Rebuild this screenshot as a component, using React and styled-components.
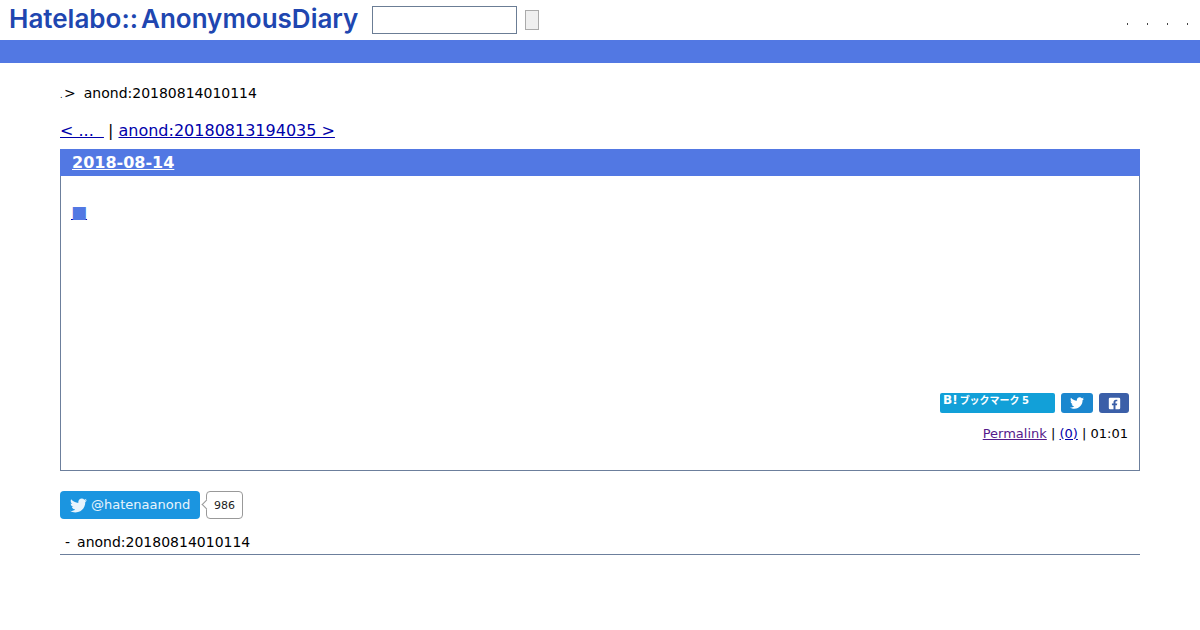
import React from "react";
import styled, { createGlobalStyle } from "styled-components";
import { FaTwitter, FaFacebookSquare } from "react-icons/fa";

const GlobalStyle = createGlobalStyle`
  body {
    margin: 0;
    background: #fff;
    color: #000;
    font-family: "DejaVu Sans", "Noto Sans CJK JP", sans-serif;
    font-size: 14px;
  }
  a { color: #0000aa; }
`;

export default function App() {
  return (
    <>
      <GlobalStyle />
      <Header>
        <Logo>Hatelabo::<LogoRest>AnonymousDiary</LogoRest></Logo>
        <SearchInput />
        <SearchButton />
        <HeaderLinks>
          <Dot />
          <Dot />
          <Dot />
          <Dot />
        </HeaderLinks>
      </Header>
      <Band />
      <Page>
        <Crumb>
          <TinyDot>.</TinyDot>
          <span>&gt;</span>
          <CrumbTitle>anond:20180814010114</CrumbTitle>
        </Crumb>
        <PrevNext>
          <PrevLink href="#prev">&lt; ... &nbsp;</PrevLink> | <a href="#next">anond:20180813194035 &gt;</a>
        </PrevNext>
        <Day>
          <DayHeader>
            <a href="#day">2018-08-14</a>
          </DayHeader>
          <DayBody>
            <Section>
              <a href="#entry">■</a>
            </Section>
            <ShareRow>
              <HatenaButton>
                <HatenaMark>B!</HatenaMark>ブックマーク 5
              </HatenaButton>
              <ShareButton color="#1b87cf" $width={32}><FaTwitter size={14} /></ShareButton>
              <ShareButton color="#3b5fa8" $width={30}><FaFacebookSquare size={13} /></ShareButton>
            </ShareRow>
            <Footer>
              <PermaLink href="#perma">Permalink</PermaLink> | <a href="#comments">(0)</a> | 01:01
            </Footer>
          </DayBody>
        </Day>
        <FollowRow>
          <FollowButton>
            <FaTwitter size={17} />
            <FollowName>@hatenaanond</FollowName>
          </FollowButton>
          <FollowCount>986</FollowCount>
        </FollowRow>
        <RefTitle>
          <span>-</span>
          <span>anond:20180814010114</span>
        </RefTitle>
      </Page>
    </>
  );
}

/* ================= HEADER ================= */
const Header = styled.div`
  display: flex;
  align-items: center;
  height: 40px;
  padding-left: 8px;
`;

const Logo = styled.div`
  width: 363px;
  margin-bottom: 4px;
  padding-left: 1px;
  color: #2046b0;
  font-family: "Inter", sans-serif;
  font-weight: 600;
  font-size: 26px;
  white-space: nowrap;
`;

const LogoRest = styled.span`
  margin-left: 3px;
`;

const SearchInput = styled.div`
  box-sizing: border-box;
  width: 145px;
  height: 28px;
  border: 1px solid #6b7d95;
  background: #fff;
`;

const SearchButton = styled.div`
  box-sizing: border-box;
  width: 14px;
  height: 20px;
  margin-left: 8px;
  border: 1px solid #aaa;
  background: #efefef;
`;

const HeaderLinks = styled.div`
  display: flex;
  gap: 19px;
  margin-left: auto;
  margin-right: 12px;
  padding-top: 8px;
`;

const Dot = styled.i`
  display: block;
  width: 1px;
  height: 2px;
  background: #444;
`;

const Band = styled.div`
  height: 23px;
  background: #5278e3;
`;

/* ================= PAGE ================= */
const Page = styled.div`
  margin: 0 60px;
`;

const Crumb = styled.div`
  display: flex;
  align-items: baseline;
  padding-top: 21px;
  height: 18px;
  line-height: 18px;
  font-size: 14px;
`;

const TinyDot = styled.span`
  font-size: 8px;
  width: 4px;
`;

const CrumbTitle = styled.span`
  margin-left: 8px;
`;

const PrevNext = styled.div`
  margin-top: 19px;
  height: 20px;
  line-height: 20px;
  font-size: 16px;
`;

const PrevLink = styled.a`
  margin-right: -1px;
`;

const Day = styled.div`
  box-sizing: border-box;
  height: 322px;
  margin-top: 8px;
  border: 1px solid #6c7f9c;
  border-top: 0;
`;

const DayHeader = styled.div`
  height: 27px;
  margin: 0 -1px;
  padding-left: 12px;
  background: #5278e3;
  line-height: 27px;
  font-size: 16px;
  font-weight: 700;

  a {
    color: #fff;
  }
`;

const DayBody = styled.div`
  padding: 0 10px 0 11px;
`;

const Section = styled.div`
  height: 190px;
  padding-top: 27px;
  margin-left: -1px;
  line-height: 18px;
  font-size: 17px;

  a {
    color: #5278e3;
    text-decoration-color: #0000aa;
  }
`;

const ShareRow = styled.div`
  display: flex;
  justify-content: flex-end;
  gap: 6px;
`;

const HatenaButton = styled.div`
  box-sizing: border-box;
  width: 115px;
  height: 20px;
  padding-left: 3px;
  border-radius: 2px;
  background: #12a0d8;
  color: #fff;
  font-size: 10px;
  font-weight: 700;
  line-height: 15px;
  word-spacing: -1px;
  white-space: nowrap;
`;

const HatenaMark = styled.span`
  margin-right: 2px;
  font-size: 12px;
`;

const ShareButton = styled.div`
  display: flex;
  align-items: center;
  justify-content: center;
  width: ${({ $width }) => $width}px;
  height: 20px;
  border-radius: 3px;
  background: ${({ color }) => color};
  color: #fff;
`;

const Footer = styled.div`
  margin-top: 12px;
  padding-right: 1px;
  text-align: right;
  font-size: 13px;
  line-height: 17px;
`;

const PermaLink = styled.a`
  color: #551a8b;
`;

const FollowRow = styled.div`
  display: flex;
  align-items: center;
  margin-top: 20px;
`;

const FollowButton = styled.div`
  display: flex;
  align-items: center;
  gap: 4px;
  box-sizing: border-box;
  width: 140px;
  height: 28px;
  padding-left: 10px;
  border-radius: 4px;
  background: #1b95e0;
  color: #e8f4fc;
  font-size: 13px;
`;

const FollowName = styled.span`
  margin-bottom: 2px;
`;

const FollowCount = styled.div`
  position: relative;
  box-sizing: border-box;
  width: 37px;
  height: 28px;
  margin-left: 6px;
  border: 1px solid #999;
  border-radius: 4px;
  background: #fff;
  color: #222;
  font-size: 11px;
  line-height: 27px;
  text-align: center;

  &::before {
    content: "";
    position: absolute;
    top: 9px;
    left: -4px;
    width: 6px;
    height: 6px;
    border-left: 1px solid #999;
    border-bottom: 1px solid #999;
    background: #fff;
    transform: rotate(45deg);
  }
`;

const RefTitle = styled.div`
  display: flex;
  gap: 7px;
  box-sizing: border-box;
  height: 36px;
  padding: 14px 0 0 5px;
  border-bottom: 1px solid #6c7f9c;
  font-size: 14px;
  line-height: 18px;
`;
